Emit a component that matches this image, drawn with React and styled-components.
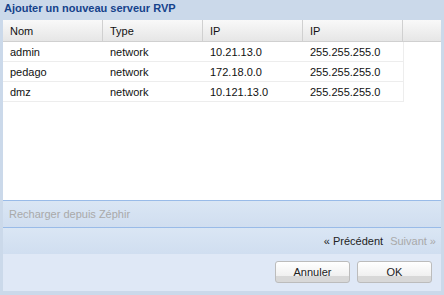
import React from "react";
import styled, { createGlobalStyle } from "styled-components";

const GlobalStyle = createGlobalStyle`
  html, body {
    margin: 0;
    padding: 0;
    background: #cbd9ea;
  }
  body {
    font-family: "Liberation Sans", Arial, sans-serif;
    font-size: 11px;
    color: #000;
  }
`;

const rows = [
  { nom: "admin", type: "network", ip: "10.21.13.0", mask: "255.255.255.0" },
  { nom: "pedago", type: "network", ip: "172.18.0.0", mask: "255.255.255.0" },
  { nom: "dmz", type: "network", ip: "10.121.13.0", mask: "255.255.255.0" },
];

export default function App() {
  return (
    <>
      <GlobalStyle />
      <Window>
        <Title>Ajouter un nouveau serveur RVP</Title>
        <Body>
          <HeaderRow>
            <HeaderCell>Nom</HeaderCell>
            <HeaderCell>Type</HeaderCell>
            <HeaderCell>IP</HeaderCell>
            <HeaderCell>IP</HeaderCell>
            <HeaderFiller />
          </HeaderRow>
          {rows.map((r) => (
            <Row key={r.nom}>
              <Cell>{r.nom}</Cell>
              <Cell>{r.type}</Cell>
              <Cell>{r.ip}</Cell>
              <Cell>{r.mask}</Cell>
            </Row>
          ))}
        </Body>
        <Toolbar>
          <ToolText disabled>Recharger depuis Zéphir</ToolText>
        </Toolbar>
        <PagingBar>
          <PageLink>« Précédent</PageLink>
          <PageLink disabled>Suivant »</PageLink>
        </PagingBar>
        <Footer>
          <Button>Annuler</Button>
          <Button>OK</Button>
        </Footer>
      </Window>
    </>
  );
}

const Window = styled.div`
  width: 444px;
  height: 295px;
  box-sizing: border-box;
  padding: 0 3px 4px 3px;
  display: flex;
  flex-direction: column;
`;

const Title = styled.div`
  height: 20px;
  line-height: 17px;
  padding-left: 1px;
  font-weight: bold;
  color: #15428b;
  white-space: nowrap;
`;

const Body = styled.div`
  height: 180px;
  background: #fff;
  overflow: hidden;
`;

const HeaderRow = styled.div`
  display: flex;
  height: 21px;
  background: linear-gradient(#f9f9f9, #e6e6e6);
  border-bottom: 1px solid #d0d0d0;
`;

const HeaderCell = styled.div`
  width: 100px;
  box-sizing: border-box;
  padding-left: 7px;
  line-height: 22px;
  border-right: 1px solid #d0d0d0;
  color: #111;
`;

const HeaderFiller = styled.div`
  flex: 1;
`;

const Row = styled.div`
  display: flex;
  width: 401px;
  height: 20px;
  box-sizing: border-box;
  border-bottom: 1px solid #ededed;
  border-right: 1px solid #ededed;
  background: #fff;
`;

const Cell = styled.div`
  width: 100px;
  box-sizing: border-box;
  padding-left: 7px;
  line-height: 20px;
  color: #111;
`;

const Toolbar = styled.div`
  height: 26px;
  border-top: 1px solid #99bbe8;
  background: linear-gradient(#dae6f4, #d0def0);
  display: flex;
  align-items: center;
  padding-left: 6px;
`;

const ToolText = styled.span`
  color: ${(p) => (p.disabled ? "#a9a9a9" : "#000")};
`;

const PagingBar = styled.div`
  height: 26px;
  border-top: 1px solid #99bbe8;
  background: linear-gradient(#dae6f4, #d0def0);
  display: flex;
  align-items: center;
  justify-content: flex-end;
  gap: 7px;
  padding-right: 5px;
`;

const PageLink = styled.span`
  color: ${(p) => (p.disabled ? "#a9a9a9" : "#222")};
`;

const Footer = styled.div`
  flex: 1;
  background: #dfe8f6;
  display: flex;
  align-items: center;
  justify-content: flex-end;
  gap: 7px;
  padding: 0 9px 2px 0;
`;

const Button = styled.button`
  width: 75px;
  height: 22px;
  box-sizing: border-box;
  border: 1px solid #bcbcbc;
  border-radius: 3px;
  background: linear-gradient(#ffffff 0%, #f0f0f0 70%, #d8d8d8 72%, #d8d8d8 100%);
  font-family: "Liberation Sans", Arial, sans-serif;
  font-size: 11px;
  color: #222;
  padding: 0;
`;
